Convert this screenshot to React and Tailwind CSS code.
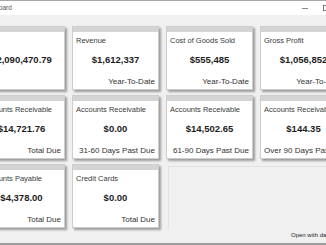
const cards = [
  { title: 'Cash', value: '$2,090,470.79', footer: '' },
  { title: 'Revenue', value: '$1,612,337', footer: 'Year-To-Date' },
  { title: 'Cost of Goods Sold', value: '$555,485', footer: 'Year-To-Date' },
  { title: 'Gross Profit', value: '$1,056,852', footer: 'Year-To-Date' },
  { title: 'Accounts Receivable', value: '$14,721.76', footer: 'Total Due' },
  { title: 'Accounts Receivable', value: '$0.00', footer: '31-60 Days Past Due' },
  { title: 'Accounts Receivable', value: '$14,502.65', footer: '61-90 Days Past Due' },
  { title: 'Accounts Receivable', value: '$144.35', footer: 'Over 90 Days Past Due' },
  { title: 'Accounts Payable', value: '$4,378.00', footer: 'Total Due' },
  { title: 'Credit Cards', value: '$0.00', footer: 'Total Due' },
];

function Card({ title, value, footer }) {
  return (
    <div className="flex flex-col h-[64px] w-[87px] bg-white border border-[#cdcdcd] shadow-[2px_2px_2px_rgba(0,0,0,0.35)]">
      <div className="h-[5px] bg-[#d4d4d4] shrink-0" />
      <div className="flex flex-col flex-1 px-[3px] whitespace-nowrap">
        <div className="mt-[4px] h-[10px] leading-[10px] text-[7.5px] text-[#3a3a3a]">{title}</div>
        <div className="mt-[8px] h-[12px] leading-[12px] text-[9.5px] font-bold text-[#1e1e1e] text-center">{value}</div>
        <div className="mt-auto mb-[2px] h-[10px] leading-[10px] text-[8px] text-[#333] text-right">{footer}</div>
      </div>
    </div>
  );
}

export default function App() {
  return (
    <div className="w-[326px] h-[245px] overflow-hidden bg-[#f0f0f0] flex flex-col font-['Liberation_Sans',Arial,sans-serif]">
      {/* title bar */}
      <div className="h-[15px] shrink-0 bg-white border-t border-[#a8a8a8] flex items-center relative">
        <span className="ml-[-20px] text-[6.5px] text-[#555]">Dashboard</span>
        <div className="ml-auto flex items-center gap-[15px] mr-[-4px]">
          <div className="w-[6px] h-px bg-[#888]" />
          <div className="w-[7px] h-[6px] border border-[#777]" />
        </div>
      </div>

      {/* cards */}
      <div className="ml-[-22px] mt-[11px] grid grid-cols-[repeat(4,87px)] grid-rows-[repeat(3,64px)] gap-x-[7px] gap-y-[5px] w-max">
        {cards.map((c, i) => (
          <Card key={i} {...c} />
        ))}
        <div className="col-span-2 mt-[2px] ml-[2px] border-l border-t border-[#e2e2e2]" />
      </div>

      {/* status */}
      <div className="flex-1 flex items-center pl-[291px] whitespace-nowrap">
        <span className="text-[6px] text-[#222]">Open with dashboard</span>
      </div>
      <div className="h-[2px] shrink-0 bg-[#9c9c9c]" />
    </div>
  );
}
